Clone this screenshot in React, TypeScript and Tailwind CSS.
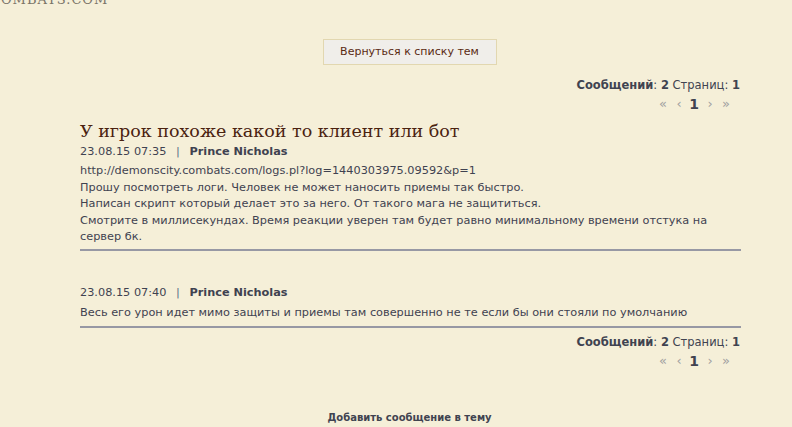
import React from "react";

const font = { fontFamily: '"DejaVu Sans", Verdana, sans-serif' };

function Stats() {
  return (
    <div className="flex flex-col items-end pr-[52px]">
      <div className="text-[11.5px] leading-[16px] text-[#404350]" style={font}>
        <b>Сообщений</b>: <b>2</b> Страниц: <b>1</b>
      </div>
      <div className="mt-[2px] flex items-center pr-[5px] text-[#a0a0a0] text-[13px] leading-[18px]" style={font}>
        <span className="w-[20px] text-center">«</span>
        <span className="w-[12px] text-center">‹</span>
        <span className="w-[18px] text-center text-[14px] font-bold text-[#404350]">1</span>
        <span className="w-[14px] text-center">›</span>
        <span className="w-[18px] text-center">»</span>
      </div>
    </div>
  );
}

export default function App() {
  return (
    <div className="w-[792px] h-[427px] overflow-hidden bg-[#f5efd8] relative" style={font}>
      <div className="absolute -top-[10px] -left-[10px] text-[13px] text-[#7a7468] tracking-[1px]" style={{ fontFamily: '"DejaVu Serif", serif' }}>
        COMBATS.COM
      </div>
      <div className="pt-[39px] flex justify-center pl-[27px]">
        <button className="h-[26px] w-[174px] border border-[#e2d7b0] bg-[#f0eeea] text-[11px] text-[#5a2a12]" style={font}>
          Вернуться к списку тем
        </button>
      </div>
      <div className="mt-[12px]">
        <Stats />
      </div>
      <div className="pl-[80px] pr-[51px] text-[11.3px] text-[#3f4250]">
        <h1 className="mt-[7px] text-[17.5px] leading-[22px] text-[#4a2210]" style={{ fontFamily: '"DejaVu Serif", Georgia, serif' }}>
          У игрок похоже какой то клиент или бот
        </h1>
        <div className="mt-[2px] leading-[16px]">
          23.08.15 07:35 <span className="mx-[6px] text-[#5d6d85]">|</span> <b>Prince Nicholas</b>
        </div>
        <div className="mt-[3px] leading-[16.6px]">
          http://demonscity.combats.com/logs.pl?log=1440303975.09592&amp;p=1
          <br />
          Прошу посмотреть логи. Человек не может наносить приемы так быстро.
          <br />
          Написан скрипт который делает это за него. От такого мага не защититься.
          <br />
          Смотрите в миллисекундах. Время реакции уверен там будет равно минимальному времени отстука на сервер бк.
        </div>
        <div className="mt-[3px] h-[2px] bg-[#9798a4]" />
        <div className="mt-[34px] leading-[16px]">
          23.08.15 07:40 <span className="mx-[6px] text-[#5d6d85]">|</span> <b>Prince Nicholas</b>
        </div>
        <div className="mt-[4px] leading-[16px]">
          Весь его урон идет мимо защиты и приемы там совершенно не те если бы они стояли по умолчанию
        </div>
        <div className="mt-[5px] h-[2px] bg-[#9798a4]" />
      </div>
      <div className="mt-[6px]">
        <Stats />
      </div>
      <div className="mt-[40px] text-center text-[10px] font-bold text-[#404350] pl-[27px]">
        Добавить сообщение в тему
      </div>
    </div>
  );
}
